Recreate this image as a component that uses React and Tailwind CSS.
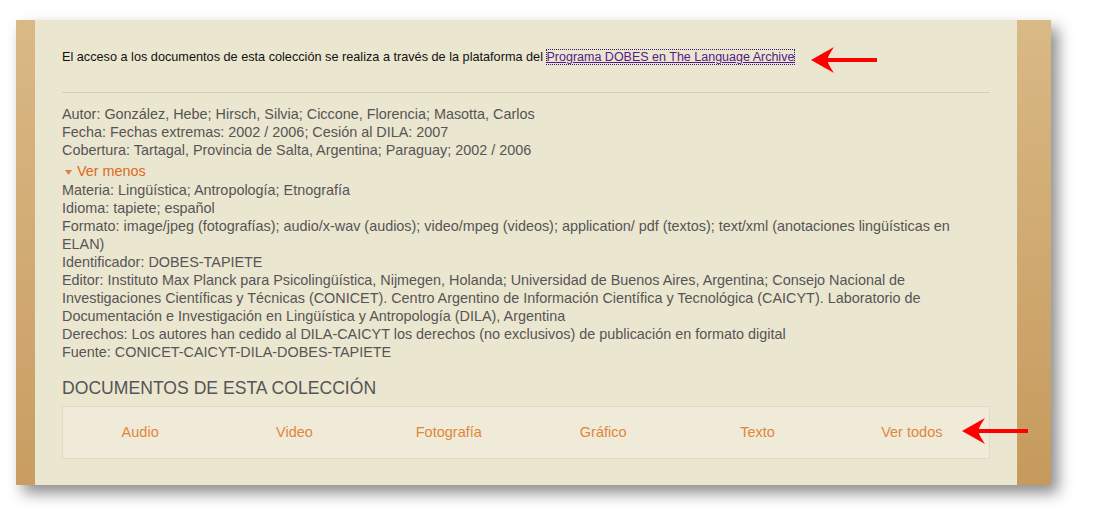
import React from 'react';

function Arrow({ className }) {
  return (
    <svg className={className} width="68" height="28" viewBox="0 0 68 28">
      <path
        d="M0 14 L23 1 Q17 10 17 12 L66 12 L66 16 L17 16 Q17 18 23 27 Z"
        fill="#ff0000"
      />
    </svg>
  );
}

const meta = [
  ['Autor: González, Hebe; Hirsch, Silvia; Ciccone, Florencia; Masotta, Carlos'],
  ['Fecha: Fechas extremas: 2002 / 2006; Cesión al DILA: 2007'],
  ['Cobertura: Tartagal, Provincia de Salta, Argentina; Paraguay; 2002 / 2006'],
];

const meta2 = [
  ['Materia: Lingüística; Antropología; Etnografía'],
  ['Idioma: tapiete; español'],
  [
    'Formato: image/jpeg (fotografías); audio/x-wav (audios); video/mpeg (videos); application/ pdf (textos); text/xml (anotaciones lingüísticas en',
    'ELAN)',
  ],
  ['Identificador: DOBES-TAPIETE'],
  [
    'Editor: Instituto Max Planck para Psicolingüística, Nijmegen, Holanda; Universidad de Buenos Aires, Argentina; Consejo Nacional de',
    'Investigaciones Científicas y Técnicas (CONICET). Centro Argentino de Información Científica y Tecnológica (CAICYT). Laboratorio de',
    'Documentación e Investigación en Lingüística y Antropología (DILA), Argentina',
  ],
  ['Derechos: Los autores han cedido al DILA-CAICYT los derechos (no exclusivos) de publicación en formato digital'],
  ['Fuente: CONICET-CAICYT-DILA-DOBES-TAPIETE'],
];

const docs = ['Audio', 'Video', 'Fotografía', 'Gráfico', 'Texto', 'Ver todos'];

function Lines({ items }) {
  return items.map((lines, i) => (
    <div key={i}>
      {lines.map((l, j) => (
        <div key={j} className="whitespace-nowrap">{l}</div>
      ))}
    </div>
  ));
}

export default function App() {
  return (
    <div className="min-h-screen bg-white pt-5 pl-4 font-['Liberation_Sans',Arial,sans-serif]">
      <div className="relative flex w-[1035px] h-[465px] shadow-[7px_8px_14px_rgba(0,0,0,0.45)]">
        <div className="w-[19px] bg-gradient-to-b from-[#d9b985] to-[#c99d62]" />
        <div className="flex-1 bg-[#ebe6cf] px-[27px] pt-[30px]">
          <p className="text-[12.7px] leading-[14px] text-[#111]">
            El acceso a los documentos de esta colección se realiza a través de la plataforma del{' '}
            <a href="#" className="text-[#551a8b] text-[12.5px] underline outline-1 outline-dotted outline-[#3a1070]">
              Programa DOBES en The Language Archive
            </a>
          </p>
          <div className="mt-[28px] border-t border-[#d3cdb6]" />
          <div className="mt-[12px] text-[14.4px] leading-[18px] text-[#555]">
            <Lines items={meta} />
            <div className="flex items-center h-[22px] pt-[2px] text-[#db6a1c] pl-[3px]">
              <svg width="7" height="5" viewBox="0 0 7 5" className="mr-[5px] mt-[2px]">
                <path d="M0 0 L7 0 L3.5 5 Z" fill="#d98050" />
              </svg>
              Ver menos
            </div>
            <Lines items={meta2} />
          </div>
          <h2 className="mt-[16px] text-[17.6px] leading-[22px] text-[#555]">DOCUMENTOS DE ESTA COLECCIÓN</h2>
          <div className="mt-[7px] grid grid-cols-6 h-[53px] bg-[#f0ebd9] border border-[#e1dbc4] items-center">
            {docs.map((d) => (
              <a key={d} href="#" className="text-center text-[14.5px] text-[#e0863a]">
                {d}
              </a>
            ))}
          </div>
        </div>
        <div className="w-[34px] bg-gradient-to-b from-[#d9b985] to-[#c69a5c]" />
        <Arrow className="absolute left-[795px] top-[26px]" />
        <Arrow className="absolute left-[946px] top-[397px]" />
      </div>
    </div>
  );
}
